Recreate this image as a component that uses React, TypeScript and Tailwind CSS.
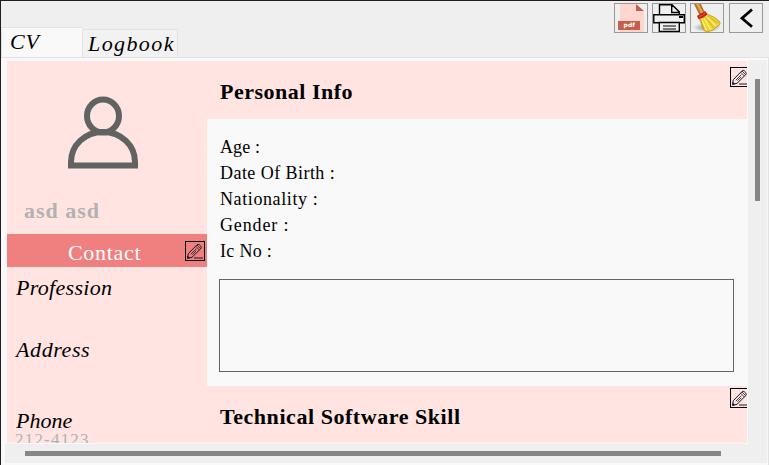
import React from "react";

const serif = "font-['Liberation_Serif',serif]";

function EditIcon({ clipped = false }: { clipped?: boolean }) {
  return (
    <div className={clipped ? "h-5 w-[17px] shrink-0 overflow-hidden" : "h-5 w-5 shrink-0"}>
      <svg width="20" height="20" viewBox="0 0 20 20" fill="none" stroke="#111b22" className="block">
        <rect x="0.5" y="0.5" width="19" height="19" stroke="#000" />
        <path d="M2.6 17.2 3.2 12.8 11.8 4Q13.3 2.8 14.4 3.8L15.8 5.2Q16.8 6.4 15.7 7.7L7 16.3Z" strokeWidth="1" />
        <path d="M10.6 5.2 14.5 9.1M12 4l3.7 3.7M5.8 13.2l5.6-5.6M7.4 13.6l3.8-3.8" strokeWidth="0.8" />
        <path d="M2.4 17.6 3 15.3l1.8 1.8Z" fill="#111b22" strokeWidth="0.5" />
        <path d="M9 17h9" strokeWidth="1" />
      </svg>
    </div>
  );
}

function ToolButton({ label, children }: { label: string; children: React.ReactNode }) {
  return (
    <button aria-label={label} className="h-[30px] w-[34px] overflow-hidden border border-[#999] bg-[#efefef]">
      {children}
    </button>
  );
}

function PdfIcon() {
  return (
    <svg width="32" height="28" viewBox="0 0 32 28" className="block">
      <path d="M5 0h16l8 7v21H5Z" fill="#ffd6cf" />
      <path d="M21 0v7h8Z" fill="#c45f4c" />
      <path d="M3 17h22v9H3Z" fill="#c45f4c" />
      <text x="14.2" y="23.2" textAnchor="middle" fontFamily="DejaVu Sans" fontWeight="700" fontSize="6" fill="#fff">pdf</text>
    </svg>
  );
}

function PrinterIcon() {
  return (
    <svg width="32" height="28" viewBox="0 0 32 28" className="block" fill="none" stroke="#000" strokeWidth="1.4">
      <path d="M6.5 10.8V.7H19l7.3 7.2v2.9M18.7 1v7.5H26" />
      <path d="M6 18.8H.8V10.8H31.3v8H26" />
      <path d="M6.3 28V18.5h20V28M6 27.4h20" />
      <path d="M10 22h13M10 25h13" strokeWidth="1.2" />
      <path d="M26 13h4" strokeWidth="2" />
    </svg>
  );
}

function BroomIcon() {
  return (
    <svg width="32" height="28" viewBox="0 0 32 28" className="block">
      <defs>
        <radialGradient id="broom-shadow">
          <stop offset="0" stopColor="#8a8a8a" />
          <stop offset="1" stopColor="#efefef" />
        </radialGradient>
      </defs>
      <ellipse cx="16" cy="23.5" rx="14" ry="4.5" fill="url(#broom-shadow)" />
      <path d="M3 0h7l3.5 8-5 3Z" fill="#b47125" />
      <path d="M5 0h3l4 8-2 1.5Z" fill="#dfa456" />
      <path d="M8 14q5-1 8-4 9 3 13 8 .5 4-4 5-2 4-6 4-3 2-6-.5-2-5-5-12.500Z" fill="#edd337" stroke="#b18c0c" strokeWidth=".7" />
      <path d="m10.500 15 5 11M13 14l7 12M15 12l10 10" stroke="#fff27d" strokeWidth="1.1" />
      <path d="m9.500 15 3.500 10M14 13l9 11M16 12l11 7" stroke="#bd9816" strokeWidth=".6" />
      <path d="M6 12Q7.500 11 9 10q3-1 5-3l2.500 3q-3 4-9 5Z" fill="#c81e16" />
      <path d="M8 12.500q4-.5 6-3.500" fill="none" stroke="#f06b50" strokeWidth=".8" />
    </svg>
  );
}

function SectionTitle({ children, height, inset, spacing }: { children: React.ReactNode; height: string; inset: string; spacing: string }) {
  return (
    <div className={`flex shrink-0 justify-between bg-[#ffe4e1] pl-[13px] ${height}`}>
      <h2 className={`pt-[18px] text-[22px] leading-[26px] font-bold whitespace-nowrap ${spacing}`}>{children}</h2>
      <div className={inset}><EditIcon clipped /></div>
    </div>
  );
}

const fields = [
  { label: "Age :", spacing: "tracking-[0.1px]" },
  { label: "Date Of Birth :", spacing: "tracking-[0.45px]" },
  { label: "Nationality :", spacing: "tracking-[0.6px]" },
  { label: "Gender :", spacing: "tracking-[0.85px]" },
  { label: "Ic No :", spacing: "tracking-[0.3px]" },
];

export default function App() {
  return (
    <div className={`flex h-[465px] w-[769px] flex-col overflow-hidden border-t border-l border-[#211d22] bg-[#efefef] text-black ${serif}`}>
      <header className="flex h-14 shrink-0 justify-between pr-[6px]">
        <nav className="flex items-end text-[22px] italic">
          <div className="h-[30px] w-[81px] border-t border-l border-[#e2e2e2] bg-[#f9f9f9] pl-2 leading-[28px] tracking-[0.8px]">CV</div>
          <div className="h-7 w-[96px] border-t border-x border-[#e2e2e2] bg-[#f2f2f2] pl-[5px] leading-[27px] tracking-[1.4px]">Logbook</div>
        </nav>
        <div className="flex gap-1 pt-[2px]">
          <ToolButton label="Export PDF"><PdfIcon /></ToolButton>
          <ToolButton label="Print"><PrinterIcon /></ToolButton>
          <ToolButton label="Clear"><BroomIcon /></ToolButton>
          <div className="ml-px flex">
            <ToolButton label="Back">
              <svg width="32" height="28" viewBox="0 0 32 28" fill="none" stroke="#000" strokeWidth="2.8" className="block">
                <path d="m22 5.500-10 8.700L22 22.700" />
              </svg>
            </ToolButton>
          </div>
        </div>
      </header>
      <main className="flex h-[408px] shrink-0 flex-col border-t border-r border-[#e2e2e2] bg-[#f9f9f9] pt-[2px] pr-px pl-1">
        <div className="flex h-[384px] shrink-0">
          <div className="flex h-[383px] w-[743px] shrink-0 bg-[#f9f9f9] pt-px pl-[2px]">
            <aside className="h-[382px] w-[200px] shrink-0 overflow-hidden bg-[#ffe4e1] text-[22px] whitespace-nowrap">
              <div className="h-[173px] pt-[35px]">
                <svg width="72" height="74" viewBox="0 0 72 74" className="ml-[60px] block" fill="none" stroke="#606362" strokeWidth="6">
                  <ellipse cx="36" cy="20" rx="16" ry="16.500" />
                  <path d="M4 69.500V66C4 49 18 36 36 36S68 49 68 66v3.500Z" />
                </svg>
                <div className="mt-[28px] pl-[17px] leading-[26px] font-bold tracking-[1px] text-[#b2b2b2]">asd asd</div>
              </div>
              <div className="flex h-[33px] items-center bg-[#f08080] pr-[2px] pl-[61px] text-white">
                <div className="w-[117px] pt-1 leading-[26px] tracking-[0.7px]">Contact</div>
                <EditIcon />
              </div>
              <div className="pt-2 pl-[9px] leading-[26px] italic">
                <div className="h-[62px] tracking-[0.3px]">Profession</div>
                <div className="h-[71px] tracking-[0.6px]">Address</div>
                <div className="h-[23px] pt-1 leading-[18px] tracking-[0px]">Phone</div>
              </div>
              <div className="pl-2 text-[17px] leading-[18px] tracking-[1.2px] text-[#b2b2b2]">212-4123</div>
            </aside>
            <section className="flex h-[382px] w-[540px] flex-col overflow-hidden">
              <SectionTitle height="h-[58px]" inset="pt-[6px]" spacing="tracking-[0.500px]">Personal Info</SectionTitle>
              <div className="h-[267px] shrink-0 px-3 pt-[15px]">
                <div className="pl-px text-[18px] leading-[26px]">
                  {fields.map((f) => <div key={f.label} className={f.spacing}>{f.label}</div>)}
                </div>
                <div className="mt-[15px] h-[93px] w-[515px] border border-[#646464]" />
              </div>
              <SectionTitle height="h-[57px]" inset="pt-[2px]" spacing="tracking-[0.550px]">Technical Software Skill</SectionTitle>
            </section>
          </div>
          <div className="h-[384px] w-5 bg-[#efefef] pt-[19px] pl-[7px]">
            <div className="h-[122px] w-[5px] bg-[#868686]" />
          </div>
        </div>
        <div className="h-[19px] w-[762px] shrink-0 bg-[#efefef] pt-[7px] pl-5">
          <div className="h-[5px] w-[696px] bg-[#868686]" />
        </div>
      </main>
    </div>
  );
}
